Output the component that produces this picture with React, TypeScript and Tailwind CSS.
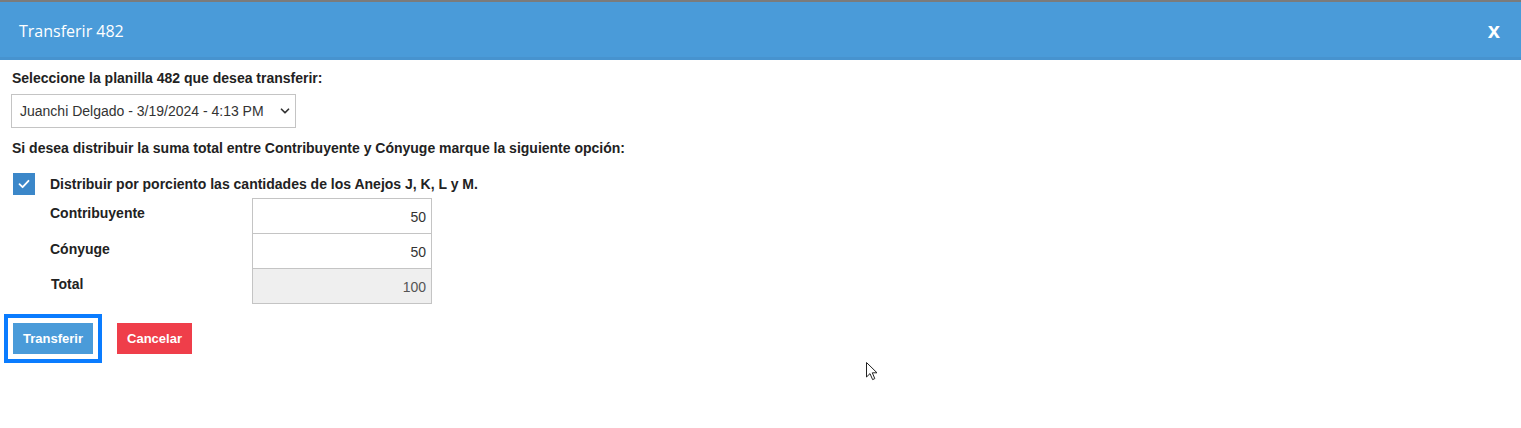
import { ChevronDown } from "lucide-react";

const rows = [
  { label: "Contribuyente", value: "50", readOnly: false },
  { label: "Cónyuge", value: "50", readOnly: false },
  { label: "Total", value: "100", readOnly: true },
];

export default function App() {
  return (
    <div className="relative w-[1521px] h-[428px] bg-white font-['Liberation_Sans',Arial,sans-serif] text-[#222]">
      {/* Header */}
      <div className="border-t-2 border-[#7b7b7b] bg-[#4a9bd9] h-[60px] flex items-center justify-between pl-[19px] pr-[21px] shadow-[inset_0_-3px_0_#4793cf]">
        <span className="font-['Open_Sans',sans-serif] text-[16px] text-white">Transferir 482</span>
        <span className="text-white font-bold text-[22px] leading-none -mt-[1px]">x</span>
      </div>

      {/* Body */}
      <div className="pl-[12px] pt-[10px]">
        <p className="text-[14px] font-bold leading-[16px]">Seleccione la planilla 482 que desea transferir:</p>
        <div className="mt-[8px] w-[285px] h-[34px] -ml-px border border-[#c4c4c4] flex items-center justify-between pl-[8px] pr-[3px] text-[14px] text-[#333]">
          <span>Juanchi Delgado - 3/19/2024 - 4:13 PM</span>
          <ChevronDown size={14} strokeWidth={3} className="text-[#333]" />
        </div>

        <p className="mt-[12px] text-[14px] font-bold leading-[16px]">
          Si desea distribuir la suma total entre Contribuyente y Cónyuge marque la siguiente opción:
        </p>

        <div className="mt-[17px] flex items-center h-[22px]">
          <div className="ml-px w-[22px] h-[22px] bg-[#3b87c9] flex items-center justify-center">
            <svg width="12" height="10" viewBox="0 0 12 10" fill="none">
              <path d="M1.5 5.2 L4.6 8.2 L10.5 1.8" stroke="white" strokeWidth="1.8" strokeLinecap="round" strokeLinejoin="round" />
            </svg>
          </div>
          <span className="ml-[15px] text-[14px] font-bold leading-[16px]">Distribuir por porciento las cantidades de los Anejos J, K, L y M.</span>
        </div>

        <div className="ml-[38px] mt-[3px] grid grid-cols-[202px_180px]">
          {rows.map((r, i) => (
            <div key={r.label} className="contents">
              <div className={`text-[14px] font-bold leading-[16px] pt-[7px] ${r.label === "Total" ? "pl-px" : ""}`}>{r.label}</div>
              <div
                className={`h-[36px] border border-[#c4c4c4] flex items-center justify-end pr-[5px] text-[14px] pt-[3px] ${
                  i > 0 ? "-mt-px" : ""
                } ${r.readOnly ? "bg-[#efefef] text-[#555]" : "bg-white text-[#333]"}`}
              >
                {r.value}
              </div>
            </div>
          ))}
        </div>

        <div className="mt-[19px] flex items-center">
          <button className="ml-px w-[80px] h-[31px] bg-[#4a9bd9] text-white text-[13px] font-bold outline-4 outline-offset-[5px] outline-solid outline-[#0a7cff]">
            Transferir
          </button>
          <button className="ml-[24px] w-[75px] h-[31px] bg-[#ef3e4a] text-white text-[13px] font-bold">Cancelar</button>
        </div>
      </div>

      {/* Mouse pointer */}
      <svg className="absolute left-[866px] top-[362px]" width="13" height="20" viewBox="0 0 13 20">
        <path d="M0.5 0.5 L0.5 15 L4 11.6 L6.6 17.6 L8.8 16.6 L6.3 10.8 L11 10.8 Z" fill="white" stroke="#222" strokeWidth="1" strokeLinejoin="round" />
      </svg>
    </div>
  );
}
